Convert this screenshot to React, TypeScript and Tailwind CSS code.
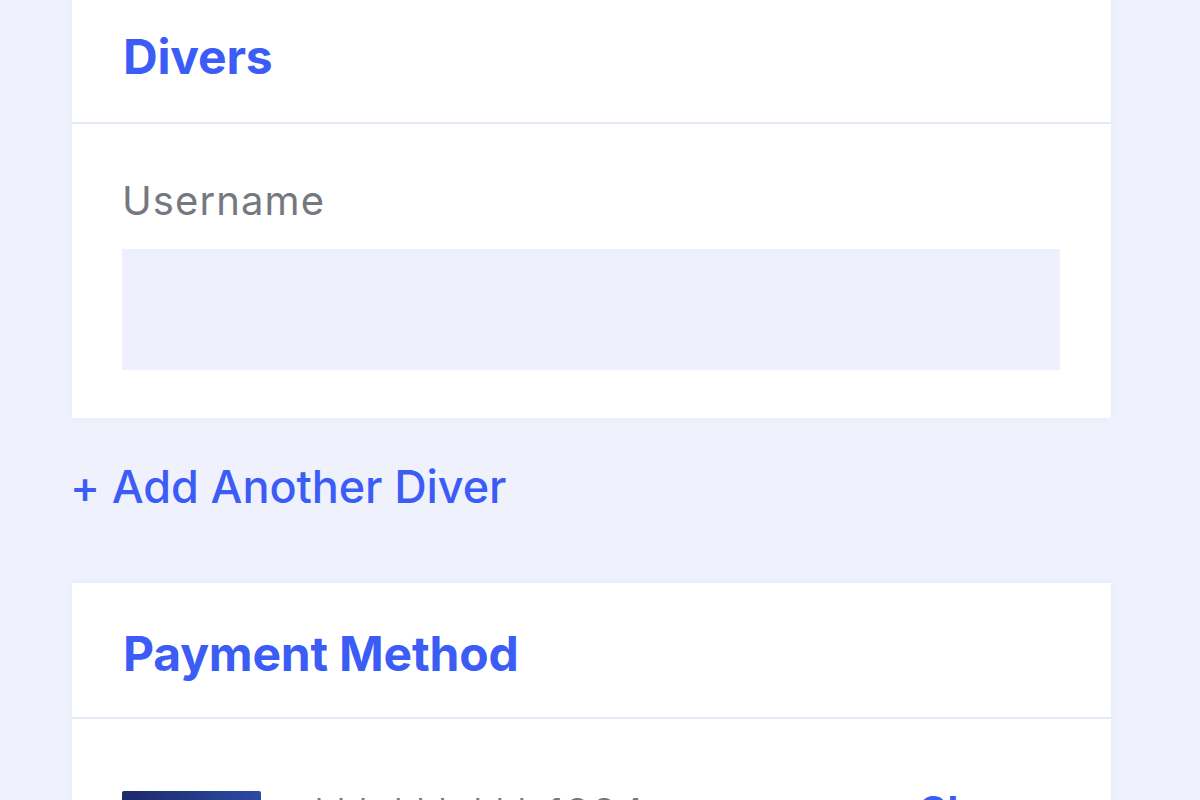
const Card = ({ title, head, children }: { title: string; head: string; children: React.ReactNode }) => {
  return (
    <section className="w-[1039px] bg-white shadow-[0_0_6px_rgba(90,100,180,0.06)]">
      <div className={`px-[51px] border-b-2 border-[#e7e8f6] ${head}`}>
        <h2 className="text-[48px] leading-[58px] font-bold text-[#3c5cf6] tracking-[-0.2px]">{title}</h2>
      </div>
      {children}
    </section>
  );
};

export default function App() {
  return (
    <div
      className="w-[1200px] h-[800px] overflow-hidden bg-[#eff1fd]"
      style={{ fontFamily: 'Inter, "Noto Sans", sans-serif' }}
    >
      <div className="pl-[72px] flex flex-col">
        <Card title="Divers" head="pt-[28px] pb-[36px]">
          <div className="px-[50px] pt-[53px] pb-[48px]">
            <label className="block text-[40px] leading-[48px] text-[#75787f] tracking-[1.1px]">Username</label>
            <div className="mt-[24px] h-[121px] w-[938px] bg-[#eef1fd]" />
          </div>
        </Card>

        <button className="self-start -ml-[2px] mt-[42px] text-[45px] leading-[54px] font-medium text-[#3c5cf6] tracking-[-0.1px]">
          + Add Another Diver
        </button>

        <div className="mt-[69px]">
          <Card title="Payment Method" head="pt-[42px] pb-[34px]">
            <div className="px-[50px] pt-[72px] pb-[40px] flex items-start">
              <div className="w-[139px] h-[88px] shrink-0 bg-gradient-to-r from-[#1d2a6b] to-[#2b4aa2] rounded-[2px]" />
              <span className="ml-[48px] w-[609px] shrink-0 mt-[-2px] text-[40px] leading-[48px] text-[#75787f] tracking-[2px]">
                *** *** *** 1234
              </span>
              <span className="mt-[-4px] text-[40px] leading-[48px] font-bold text-[#3c5cf6]">Change</span>
            </div>
          </Card>
        </div>
      </div>
    </div>
  );
}
